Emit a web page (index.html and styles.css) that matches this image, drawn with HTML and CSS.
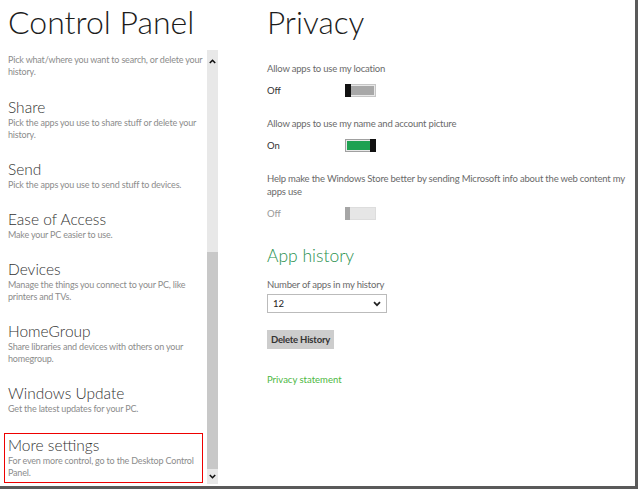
FILE: index.html
```html
<!DOCTYPE html>
<html lang="en">
<head>
    <meta charset="UTF-8">
    <title>Control Panel - Privacy</title>
    <link rel="stylesheet" href="styles.css">
</head>
<body>
    <div class="window">
        <div class="sidebar">
            <h1 class="page-title">Control Panel</h1>
            <div class="list-area">
                <ul class="category-list">
                    <li class="category cut">
                        <p class="category-desc">Pick what/where you want to search, or delete your history.</p>
                    </li>
                    <li class="category">
                        <h2 class="category-name">Share</h2>
                        <p class="category-desc">Pick the apps you use to share stuff or delete your history.</p>
                    </li>
                    <li class="category">
                        <h2 class="category-name">Send</h2>
                        <p class="category-desc">Pick the apps you use to send stuff to devices.</p>
                    </li>
                    <li class="category">
                        <h2 class="category-name">Ease of Access</h2>
                        <p class="category-desc">Make your PC easier to use.</p>
                    </li>
                    <li class="category">
                        <h2 class="category-name">Devices</h2>
                        <p class="category-desc">Manage the things you connect to your PC, like printers and TVs.</p>
                    </li>
                    <li class="category">
                        <h2 class="category-name">HomeGroup</h2>
                        <p class="category-desc">Share libraries and devices with others on your homegroup.</p>
                    </li>
                    <li class="category">
                        <h2 class="category-name">Windows Update</h2>
                        <p class="category-desc">Get the latest updates for your PC.</p>
                    </li>
                    <li class="category selected">
                        <h2 class="category-name">More settings</h2>
                        <p class="category-desc">For even more control, go to the Desktop Control Panel.</p>
                    </li>
                </ul>
                <div class="scrollbar">
                    <svg class="scroll-arrow" width="7" height="5" viewBox="0 0 7 5"><path d="M0.8 4L3.5 1.3 6.2 4" fill="none" stroke="#111" stroke-width="1.6"/></svg>
                    <div class="scroll-track">
                        <div class="scroll-thumb"></div>
                    </div>
                    <svg class="scroll-arrow down" width="7" height="5" viewBox="0 0 7 5"><path d="M0.8 1L3.5 3.7 6.2 1" fill="none" stroke="#111" stroke-width="1.6"/></svg>
                </div>
            </div>
        </div>

        <div class="content">
            <h1 class="page-title">Privacy</h1>

            <div class="setting">
                <div class="setting-label">Allow apps to use my location</div>
                <div class="toggle-row">
                    <span class="toggle-state">Off</span>
                    <span class="toggle off"><span class="knob"></span></span>
                </div>
            </div>

            <div class="setting">
                <div class="setting-label">Allow apps to use my name and account picture</div>
                <div class="toggle-row">
                    <span class="toggle-state">On</span>
                    <span class="toggle on"><span class="knob"></span></span>
                </div>
            </div>

            <div class="setting">
                <div class="setting-label">Help make the Windows Store better by sending Microsoft info about the web content my apps use</div>
                <div class="toggle-row disabled">
                    <span class="toggle-state">Off</span>
                    <span class="toggle off"><span class="knob"></span></span>
                </div>
            </div>

            <h2 class="section-title">App history</h2>
            <div class="setting-label">Number of apps in my history</div>
            <div class="select-box">
                <span>12</span>
                <svg width="8" height="6" viewBox="0 0 8 6"><path d="M1 1.2l3 3 3-3" fill="none" stroke="#222" stroke-width="1.7"/></svg>
            </div>
            <button class="plain-btn">Delete History</button>
            <a class="link" href="#">Privacy statement</a>
        </div>
    </div>
</body>
</html>
```

FILE: styles.css
```css
* {
    box-sizing: border-box;
}

body {
    margin: 0;
    background: #fff;
    font-family: Lato, "Open Sans", sans-serif;
    color: #444;
}

.window {
    width: 638px;
    height: 489px;
    border-right: 3px solid #5a5a5a;
    border-bottom: 3px solid #5a5a5a;
    display: grid;
    grid-template-columns: 259px 1fr;
    overflow: hidden;
}

.page-title {
    margin: 0;
    font-weight: 300;
    font-size: 32px;
    line-height: 44px;
    color: #1c1c1c;
}

.sidebar {
    padding-left: 4px;
    display: flex;
    flex-direction: column;
}

.sidebar .page-title {
    padding-left: 4px;
}

.list-area {
    display: flex;
    gap: 4px;
    margin-top: 6px;
    height: 434px;
}

.category-list {
    list-style: none;
    margin: 0;
    padding: 0 0 0 4px;
    width: 199px;
    overflow: hidden;
}

.category {
    padding-bottom: 18px;
}

.category.cut {
    padding-top: 4px;
    padding-bottom: 19px;
}

.category-name {
    margin: 0;
    font-weight: 300;
    font-size: 15.5px;
    line-height: 20px;
    color: #333;
}

.category-desc {
    margin: 0;
    font-size: 9px;
    line-height: 12px;
    letter-spacing: -0.18px;
    color: #8c8c8c;
}

.category.selected {
    margin-left: -4px;
    padding: 1px 3px 3px;
    border: 1px solid #e00;
    width: 199px;
}

.scrollbar {
    width: 11px;
    background: #e8e8e8;
    display: flex;
    flex-direction: column;
    align-items: center;
}

.scroll-arrow {
    flex: none;
    margin: 9px 0 4px;
}

.scroll-arrow.down {
    margin: 5px 0 5px;
}

.scroll-track {
    flex: 1;
    width: 100%;
    display: flex;
    flex-direction: column;
    justify-content: flex-end;
}

.scroll-thumb {
    height: 217px;
    background: #c8c8c8;
}

.content {
    padding-left: 8px;
}

.content .page-title {
    font-size: 31.5px;
}

.setting {
    margin-top: 17px;
}

.setting:first-of-type {
    margin-top: 18px;
}

.setting-label {
    font-size: 9.5px;
    line-height: 13px;
    letter-spacing: -0.2px;
    color: #6a6a6a;
}

.toggle-row {
    display: flex;
    align-items: center;
    height: 20px;
    margin-top: 5px;
}

.toggle-state {
    width: 78px;
    font-size: 9.5px;
    color: #333;
}

.toggle {
    width: 31px;
    height: 13px;
    border: 1px solid #a8a8a8;
    display: flex;
    padding: 1px;
}

.toggle .knob {
    width: 6px;
    height: 13px;
    margin: -2px 0 0 -2px;
    background: #111;
}

.toggle.off {
    background: #a8a8a8;
    border-color: #c6c6c6;
    box-shadow: inset 0 0 0 1px #e8e8e8;
}

.toggle.on {
    background: #1ea152;
    border-color: #a0a0a0;
    box-shadow: inset 0 0 0 1px #e8e8e8;
    justify-content: flex-end;
}

.toggle.on .knob {
    margin: -2px -2px 0 0;
}

.toggle-row.disabled .toggle-state {
    color: #999;
}

.toggle-row.disabled .toggle {
    background: #e6e6e6;
    border-color: #ddd;
    box-shadow: none;
}

.toggle-row.disabled .knob {
    background: #a6a6a6;
    width: 5px;
}

.section-title {
    margin: 23px 0 12px;
    font-weight: 300;
    font-size: 17.5px;
    line-height: 20px;
    color: #2b9150;
}

.select-box {
    width: 120px;
    height: 19px;
    margin-top: 3px;
    border: 1px solid #bbb;
    display: flex;
    align-items: center;
    justify-content: space-between;
    padding: 0 5px;
    font-size: 9.5px;
    color: #222;
}

.plain-btn {
    display: block;
    margin-top: 17px;
    border: none;
    background: #cdcdcd;
    padding: 0 4px;
    height: 19px;
    font-family: inherit;
    font-size: 9.5px;
    font-weight: 700;
    letter-spacing: -0.2px;
    color: #333;
}

.link {
    display: block;
    margin-top: 25px;
    font-size: 9.5px;
    color: #4db83f;
    text-decoration: none;
}
```
